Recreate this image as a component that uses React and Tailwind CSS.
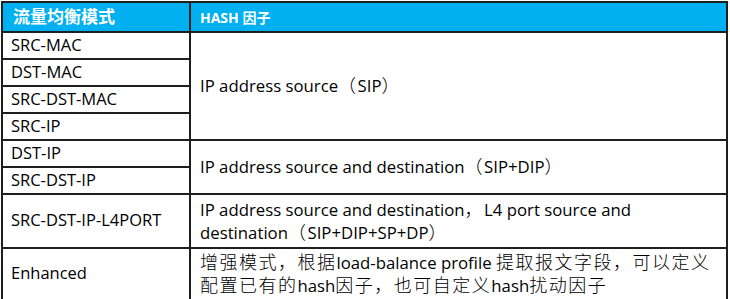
export default function App() {
  const font = { fontFamily: '"Open Sans", "Noto Sans CJK SC", sans-serif' };
  const cell = "border-2 border-[#1f1f1f] align-middle";
  const left = `${cell} pl-[8px] text-[16.5px] text-black`;
  const right = `${cell} pl-[9px] pr-2 text-[16.75px] text-black leading-[23px]`;
  const cjk = "text-[18px] font-light tracking-[1.5px]";

  return (
    <div className="w-[730px] h-[299px] bg-white pt-px pl-px" style={font}>
      <table className="border-collapse w-[727px] table-fixed">
        <colgroup>
          <col className="w-[188px]" />
          <col />
        </colgroup>
        <tbody>
          <tr className="h-[30px] bg-[#00b0f0]">
            <td className={`${cell} pl-[10px] text-[17px] font-bold text-white`}>流量均衡模式</td>
            <td className={`${cell} pl-[9px] text-[14px] font-bold text-white`}>HASH 因子</td>
          </tr>
          <tr className="h-[27px]">
            <td className={left}>SRC-MAC</td>
            <td className={right} rowSpan={4}>IP address source<span className={cjk}>（</span>SIP<span className={cjk}>）</span></td>
          </tr>
          <tr className="h-[27px]">
            <td className={left}>DST-MAC</td>
          </tr>
          <tr className="h-[27px]">
            <td className={left}>SRC-DST-MAC</td>
          </tr>
          <tr className="h-[26px]">
            <td className={left}>SRC-IP</td>
          </tr>
          <tr className="h-[27px]">
            <td className={left}>DST-IP</td>
            <td className={right} rowSpan={2}>IP address source and destination<span className={cjk}>（</span>SIP+DIP<span className={cjk}>）</span></td>
          </tr>
          <tr className="h-[26px]">
            <td className={left}>SRC-DST-IP</td>
          </tr>
          <tr className="h-[54px]">
            <td className={left}>SRC-DST-IP-L4PORT</td>
            <td className={right}>
              IP address source and destination<span className={cjk}>，</span>L4 port source and
              <br />
              destination<span className={cjk}>（</span>SIP+DIP+SP+DP<span className={cjk}>）</span>
            </td>
          </tr>
          <tr className="h-[52px]">
            <td className={left}>Enhanced</td>
            <td className={right}>
              <span className={cjk}>增强模式，根据</span>load-balance profile <span className={cjk}>提取报文字段，可以定义</span>
              <br />
              <span className={cjk}>配置已有的</span>hash<span className={cjk}>因子，也可自定义</span>hash<span className={cjk}>扰动因子</span>
            </td>
          </tr>
        </tbody>
      </table>
    </div>
  );
}
